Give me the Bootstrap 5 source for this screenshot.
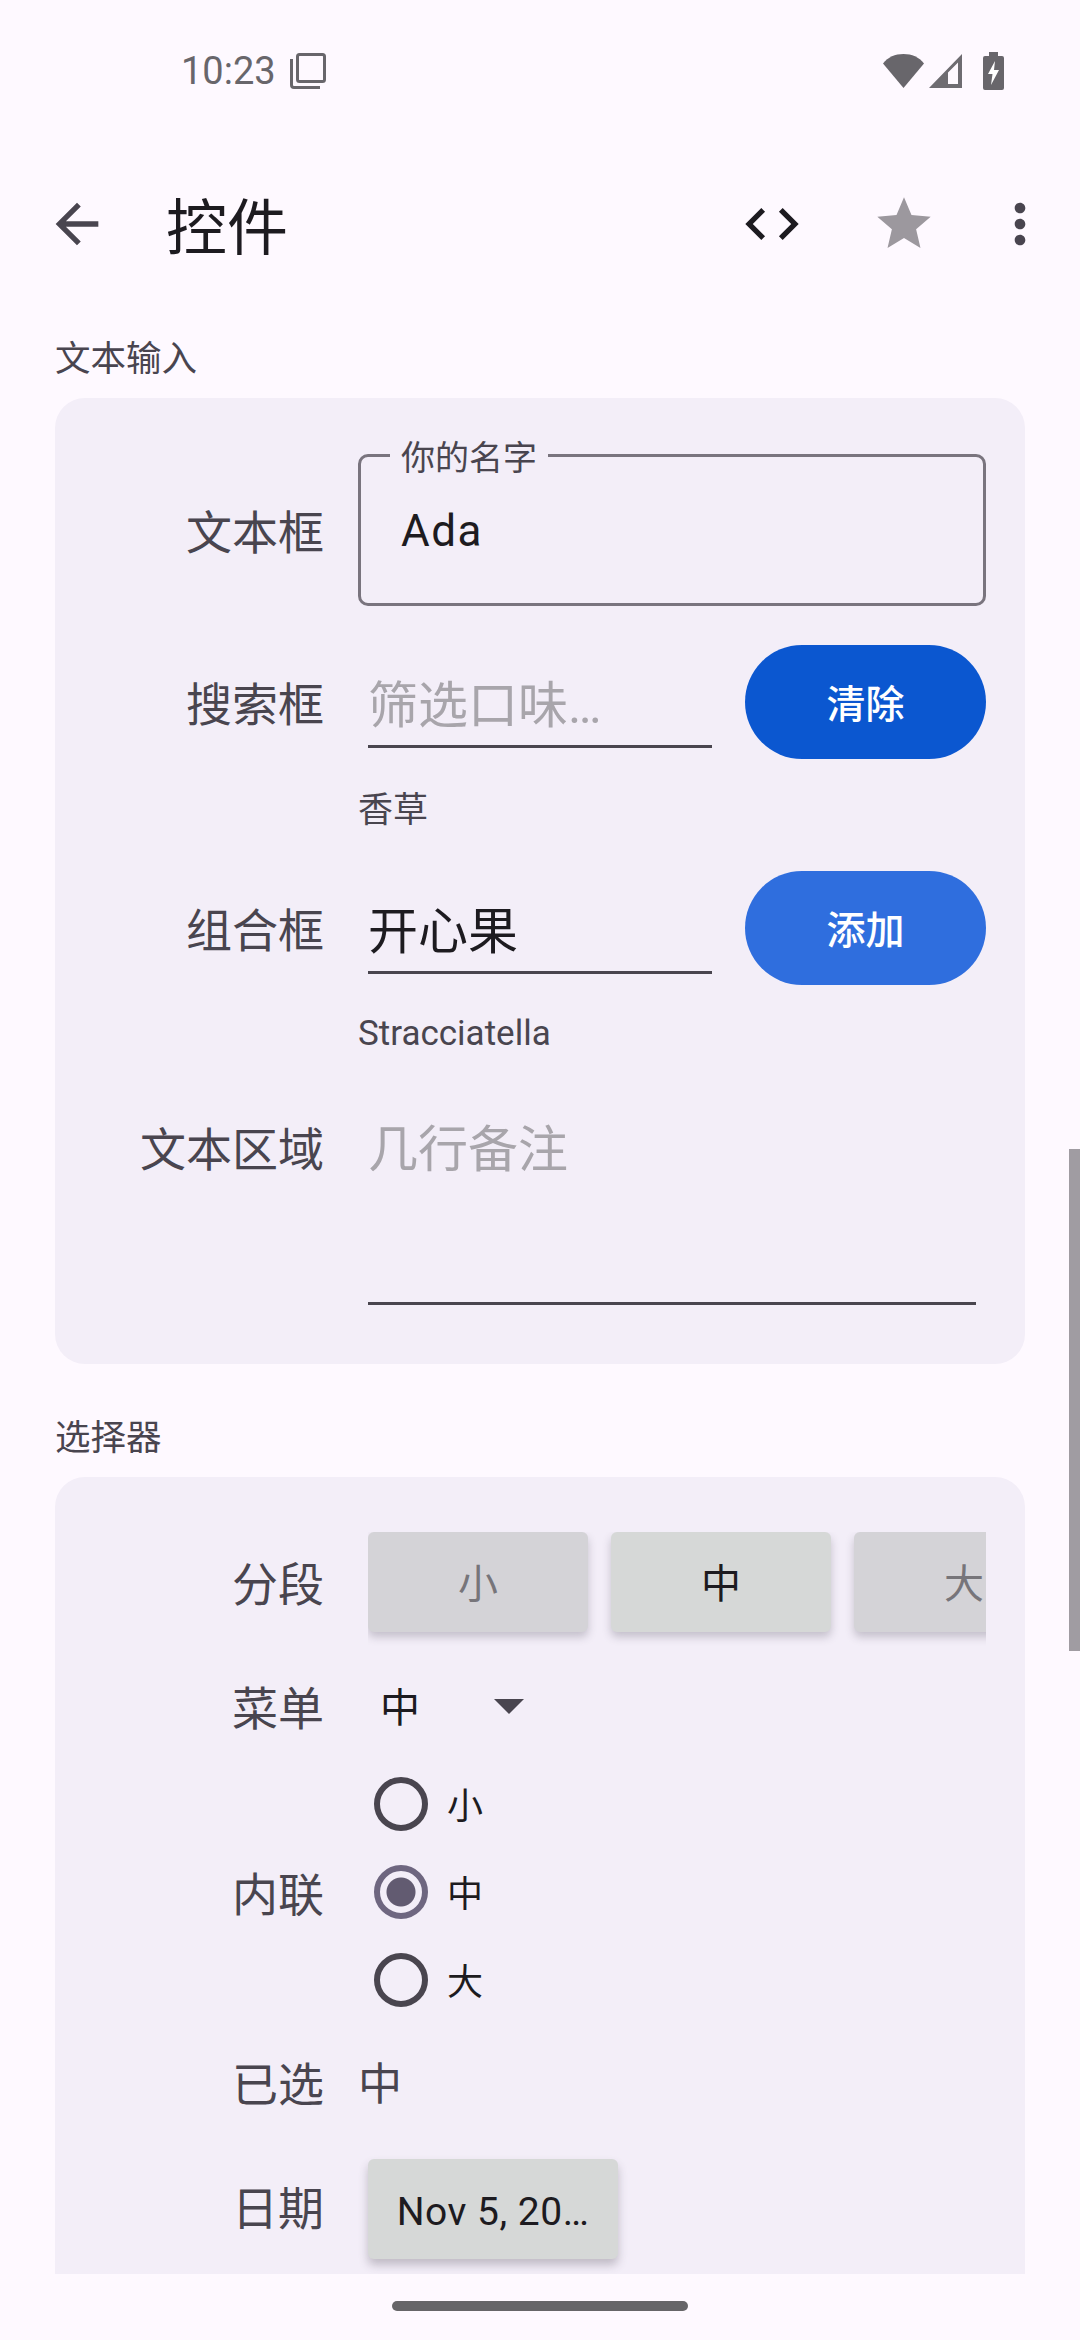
<!DOCTYPE html>
<html lang="zh-CN">
<head>
    <meta charset="UTF-8">
    <title>控件</title>
    <link href="https://cdn.jsdelivr.net/npm/bootstrap@5.3.0/dist/css/bootstrap.min.css" rel="stylesheet">
    <style>
        html, body { height: 2340px; }
        body {
            width: 1080px;
            background: #fef9ff;
            color: #1d1b20;
            font-family: Roboto, "Noto Sans CJK SC", sans-serif;
            overflow: hidden;
            position: relative;
        }
        /* 状态栏 */
        .status-bar { height: 160px; padding: 0 76px 18px 181px; color: #68666b; font-size: 38px; }
        .status-time { line-height: 44px; }
        /* 顶栏 */
        .top-bar { height: 128px; padding-left: 45px; }
        .top-title { font-size: 61px; line-height: 80px; margin-left: 57px; padding-top: 10px; }
        .top-code { margin-left: auto; }
        .top-star { margin-left: 68px; }
        .top-more { margin-left: 52px; margin-right: 28px; }
        .ic-64 { width: 64px; height: 64px; flex: none; }
        /* 内容 */
        .page-body { flex: 1 1 0; min-height: 0; overflow: hidden; padding: 45px 55px 0; }
        .sec-title { font-size: 35.5px; line-height: 50px; color: #49454f; margin-bottom: 15px; padding-top: 1px; height: 50px; }
        .sec-title-next { margin-top: 48px; }
        .panel { background: #f3eef8; border-radius: 30px; padding-right: 39px; }
        .panel-a { padding-top: 56px; padding-bottom: 59px; }
        .panel-b { padding-top: 55px; padding-bottom: 60px; border-bottom-left-radius: 0; border-bottom-right-radius: 0; flex: none; }
        .row-lbl { width: 269px; flex: none; text-align: right; font-size: 46px; line-height: 60px; padding-top: 6px; color: #49454f; }
        .row-lbl-up { padding-top: 0; }
        .row-empty { width: 269px; flex: none; }
        .row-body { margin-left: 44px; min-width: 0; }
        /* 输入框 */
        .outline-box { margin-left: 34px; height: 152px; border: 3px solid #79747e; border-radius: 10px; position: relative; padding-left: 40px; padding-top: 4px; font-size: 44px; line-height: 140px; letter-spacing: 1.5px; }
        .outline-lbl { position: absolute; left: 29px; top: -21px; line-height: 44px; font-size: 34px; letter-spacing: 0; color: #49454f; padding: 0 11px; background: #f3eef8; }
        .line-field { width: 344px; height: 92px; border-bottom: 3px solid #49454f; font-size: 50px; line-height: 60px; padding-top: 20px; white-space: nowrap; }
        .line-wide { width: 608px; height: 185px; margin-top: 6px; padding-top: 0; }
        .hint { color: #a8a5ab; }
        .pill-btn { width: 241px; height: 114px; margin-left: 33px; color: #fff; font-size: 39px; font-weight: 500; line-height: 50px; border: 0; border-radius: 57px; padding: 6px 0 0; }
        .pill-clear { background: #0b57d0; }
        .pill-clear:hover { background: #0b57d0; color: #fff; }
        .pill-add { background: #2f6ede; }
        .pill-add:hover { background: #2f6ede; color: #fff; }
        .sub-text { margin-left: 34px; font-size: 35px; line-height: 50px; color: #49454f; }
        /* 分段 */
        .seg-wrap { width: 618px; overflow: hidden; padding-bottom: 14px; margin-bottom: -14px; gap: 23px; }
        .seg-btn { width: 220px; height: 100px; flex: none; border: 0; border-radius: 6px; background: #d4d3d7; color: #77757a; font-size: 40px; line-height: 50px; box-shadow: 0 5px 9px rgba(60,55,70,.25); padding: 6px 0 0; }
        .seg-on { background: #d6d8d7; color: #1d1b20; }
        .drop-val { font-size: 40px; line-height: 60px; margin-left: 12px; padding-top: 6px; }
        .drop-arrow { width: 0; height: 0; border-left: 15px solid transparent; border-right: 15px solid transparent; border-top: 15px solid #49454f; margin-left: 74px; }
        /* 单选 */
        .opt-row { height: 54px; margin-bottom: 34px; margin-left: 0; padding-left: 0; }
        .opt-row:last-child { margin-bottom: 0; }
        .opt-input.form-check-input { float: none; width: 54px; height: 54px; margin: 0 0 0 6px; background: transparent; border: 6px solid #49454f; box-shadow: none; }
        .opt-input.form-check-input:checked { border-color: #6e6680; background: radial-gradient(circle, #625b71 14px, transparent 15px); }
        .opt-text { margin-left: 19px; font-size: 36px; line-height: 54px; color: #1d1b20; padding-top: 6px; }
        .picked { margin-left: 34px; font-size: 44px; line-height: 60px; padding-top: 6px; color: #49454f; }
        .date-btn { width: 250px; height: 100px; border: 0; border-radius: 6px; background: #d6d8d7; color: #1d1b20; font-size: 39px; letter-spacing: .5px; line-height: 50px; padding: 6px 0 0; box-shadow: 0 6px 10px rgba(60,55,70,.28); }
        /* 底部 */
        .gesture-bar { height: 66px; flex: none; padding-top: 27px; }
        .gesture-pill { width: 296px; height: 10px; border-radius: 5px; background: #666568; }
        .scroll-thumb { position: absolute; right: 0; top: 1149px; width: 11px; height: 502px; background: #a09ca2; }
    </style>
</head>
<body class="d-flex flex-column">
    <!-- 状态栏 -->
    <div class="status-bar d-flex align-items-center flex-shrink-0">
        <span class="status-time">10:23</span>
        <svg style="margin-left:14px" width="36" height="36" viewBox="0 0 36 36" fill="none" stroke="#68666b" stroke-width="3">
            <rect x="7.5" y="1.5" width="27" height="27" rx="2"/>
            <path d="M1.5 6v26a2.5 2.5 0 0 0 2.5 2.5h26"/>
        </svg>
        <svg class="ms-auto" width="41" height="36" viewBox="0 0 41 36"><path fill="#68666b" d="M20.5 35 0 10.500C5 4 12 1 20.500 1S36 4 41 10.500z"/></svg>
        <svg style="margin-left:4px" width="35" height="36" viewBox="0 0 35 36"><path fill="#6e6c71" fill-rule="evenodd" d="M34 1v34H1zM30 9.500 20 19.500V31h10z"/></svg>
        <svg style="margin-left:20px" width="21" height="38" viewBox="0 0 21 38"><path fill="#68666b" d="M6 0h9v4h4a2 2 0 0 1 2 2v30a2 2 0 0 1-2 2H2a2 2 0 0 1-2-2V6a2 2 0 0 1 2-2h4z"/><path fill="#fff" d="M12 9 5 22h4.500L8 33l8-15h-5z"/></svg>
    </div>

    <!-- 顶栏 -->
    <div class="top-bar d-flex align-items-center flex-shrink-0">
        <svg class="ic-64" viewBox="0 0 24 24" fill="#49454f"><path d="M20 11H7.830l5.590-5.590L12 4l-8 8 8 8 1.410-1.410L7.830 13H20v-2z"/></svg>
        <div class="top-title">控件</div>
        <svg class="ic-64 top-code" viewBox="0 0 24 24" fill="#1d1b20"><path d="M9.400 16.600L4.800 12l4.600-4.600L8 6l-6 6 6 6 1.400-1.400zm5.200 0l4.600-4.600-4.600-4.600L16 6l6 6-6 6-1.400-1.400z"/></svg>
        <svg class="ic-64 top-star" viewBox="0 0 24 24" fill="#9c989e"><path d="M12 17.270L18.180 21l-1.640-7.030L22 9.240l-7.190-.61L12 2 9.190 8.630 2 9.240l5.460 4.730L5.820 21z"/></svg>
        <svg class="ic-64 top-more" viewBox="0 0 24 24" fill="#49454f"><path d="M12 8c1.100 0 2-.9 2-2s-.9-2-2-2-2 .9-2 2 .9 2 2 2zm0 2c-1.100 0-2 .9-2 2s.9 2 2 2 2-.9 2-2-.9-2-2-2zm0 6c-1.100 0-2 .9-2 2s.9 2 2 2 2-.9 2-2-.9-2-2-2z"/></svg>
    </div>

    <!-- 内容 -->
    <div class="page-body d-flex flex-column">
        <div class="sec-title">文本输入</div>
        <div class="panel panel-a">
            <div class="d-flex align-items-center">
                <div class="row-lbl">文本框</div>
                <div class="outline-box flex-grow-1">
                    <span class="outline-lbl">你的名字</span>
                    Ada
                </div>
            </div>
            <div class="d-flex align-items-center" style="margin-top:39px">
                <div class="row-lbl">搜索框</div>
                <div class="row-body line-field hint">筛选口味…</div>
                <button class="btn pill-btn pill-clear" type="button">清除</button>
            </div>
            <div class="d-flex" style="margin-top:27px">
                <div class="row-empty"></div>
                <div class="sub-text">香草</div>
            </div>
            <div class="d-flex align-items-center" style="margin-top:35px">
                <div class="row-lbl">组合框</div>
                <div class="row-body line-field">开心果</div>
                <button class="btn pill-btn pill-add" type="button">添加</button>
            </div>
            <div class="d-flex" style="margin-top:24px">
                <div class="row-empty"></div>
                <div class="sub-text">Stracciatella</div>
            </div>
            <div class="d-flex align-items-start" style="margin-top:55px">
                <div class="row-lbl">文本区域</div>
                <div class="row-body line-field line-wide hint">几行备注</div>
            </div>
        </div>

        <div class="sec-title sec-title-next">选择器</div>
        <div class="panel panel-b">
            <div class="d-flex align-items-center">
                <div class="row-lbl">分段</div>
                <div class="row-body seg-wrap d-flex">
                    <button class="btn seg-btn" type="button">小</button>
                    <button class="btn seg-btn seg-on" type="button">中</button>
                    <button class="btn seg-btn" type="button">大</button>
                </div>
            </div>
            <div class="d-flex align-items-center" style="margin-top:41px">
                <div class="row-lbl">菜单</div>
                <div class="row-body d-flex align-items-center">
                    <span class="drop-val">中</span>
                    <span class="drop-arrow"></span>
                </div>
            </div>
            <div class="d-flex align-items-center" style="margin-top:38px">
                <div class="row-lbl">内联</div>
                <div class="row-body">
                    <div class="form-check opt-row d-flex align-items-center">
                        <input class="form-check-input opt-input" type="radio" name="sz" id="szS">
                        <label class="opt-text" for="szS">小</label>
                    </div>
                    <div class="form-check opt-row d-flex align-items-center">
                        <input class="form-check-input opt-input" type="radio" name="sz" id="szM" checked>
                        <label class="opt-text" for="szM">中</label>
                    </div>
                    <div class="form-check opt-row d-flex align-items-center">
                        <input class="form-check-input opt-input" type="radio" name="sz" id="szL">
                        <label class="opt-text" for="szL">大</label>
                    </div>
                </div>
            </div>
            <div class="d-flex align-items-center" style="margin-top:42px">
                <div class="row-lbl">已选</div>
                <div class="picked">中</div>
            </div>
            <div class="d-flex align-items-center" style="margin-top:44px">
                <div class="row-lbl row-lbl-up">日期</div>
                <div class="row-body"><button class="btn date-btn" type="button">Nov 5, 20…</button></div>
            </div>
        </div>
    </div>

    <!-- 手势条 -->
    <div class="gesture-bar d-flex justify-content-center">
        <div class="gesture-pill"></div>
    </div>

    <div class="scroll-thumb"></div>
</body>
</html>
